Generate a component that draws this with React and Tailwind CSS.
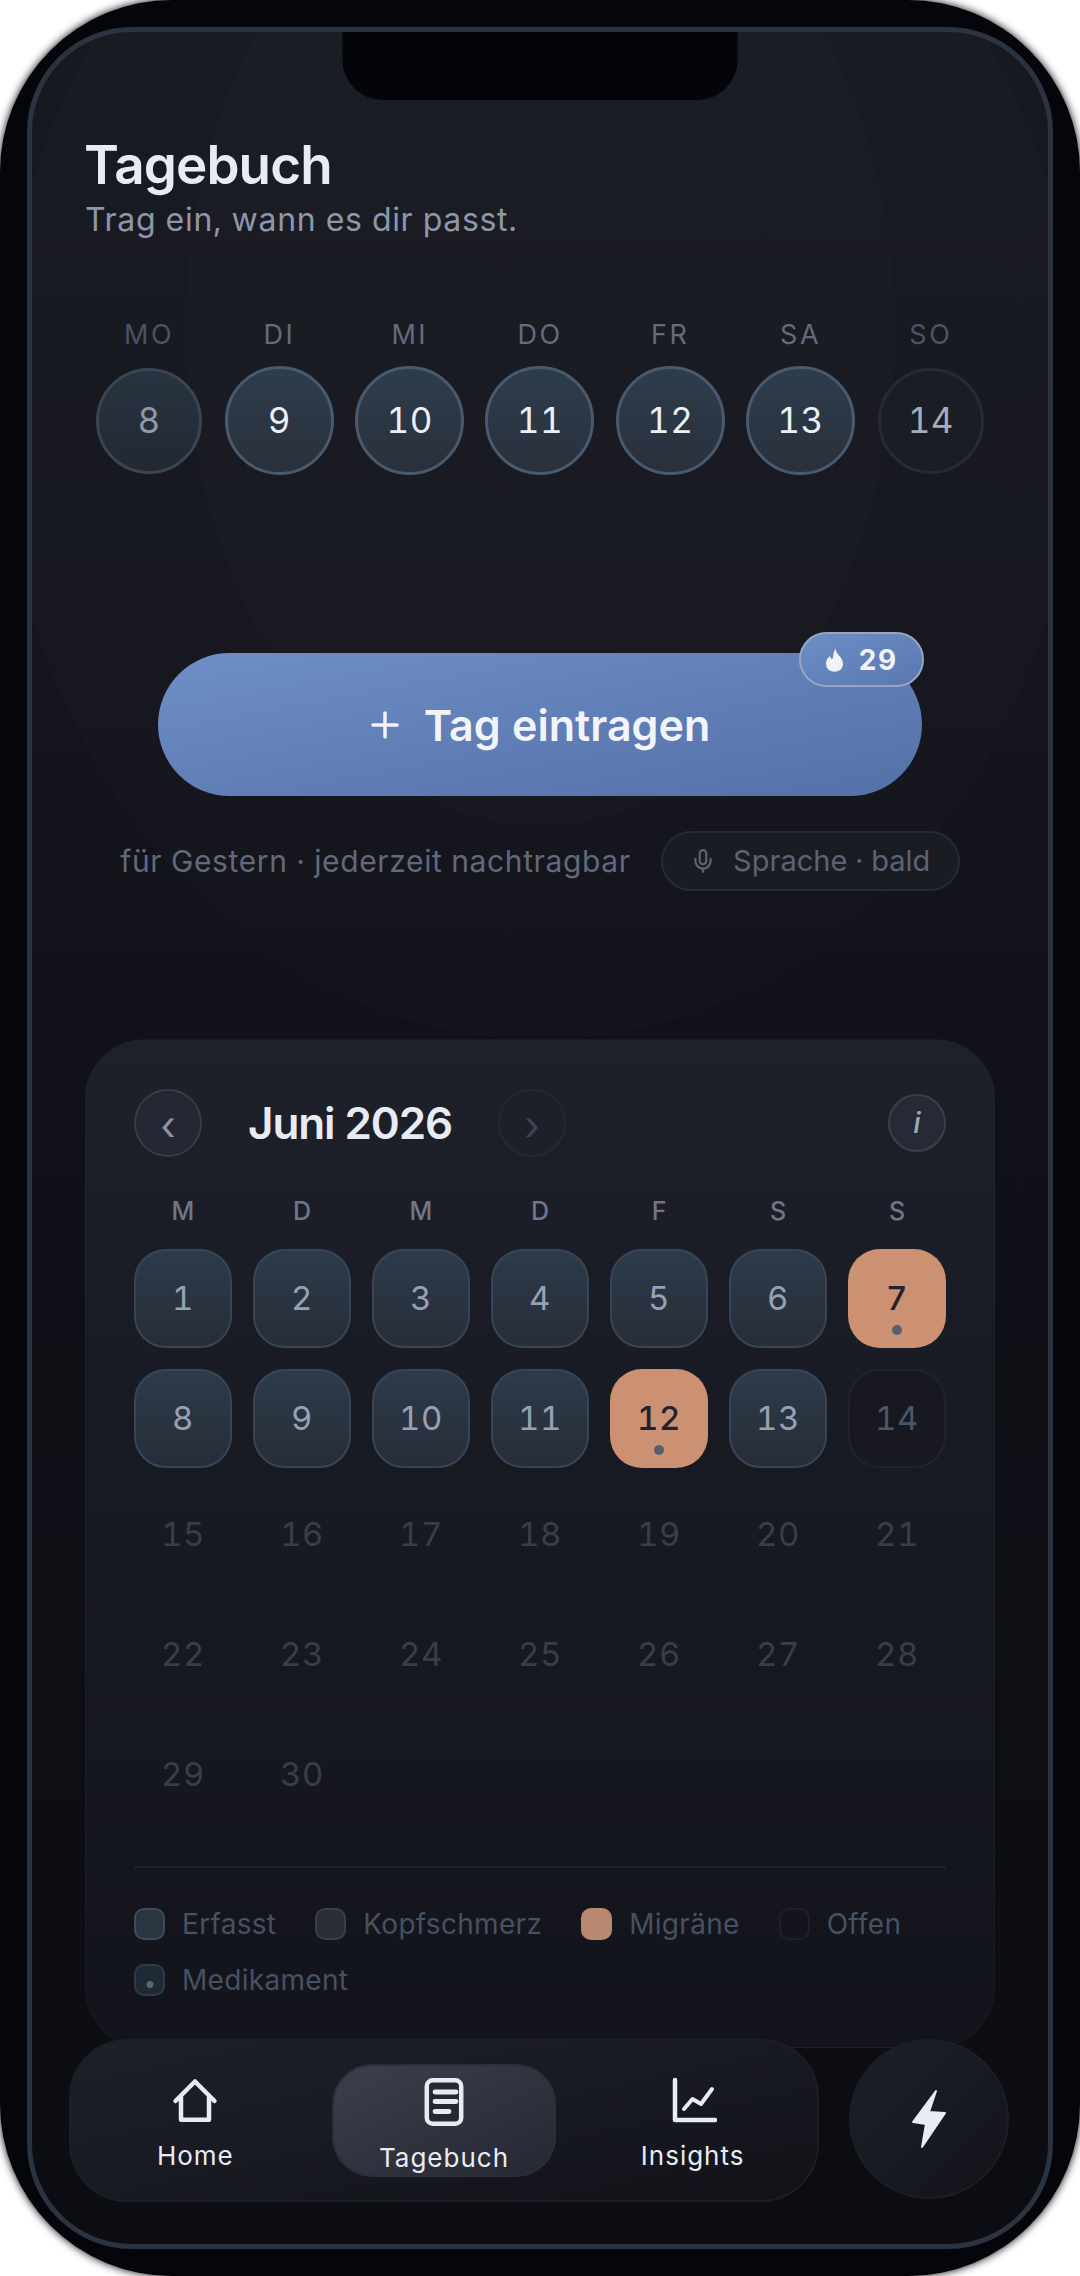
import React from "react";
import { Mic } from "lucide-react";

const week = [
  { l: "MO", d: 8, lc: "text-[#4a5366]", c: "h-[106px] w-[106px] border-[#3a4553] bg-gradient-to-b from-[#283441] to-[#232832] text-[#8f97a9]" },
  { l: "DI", d: 9, lc: "text-[#646b7c]", c: "h-[109px] w-[109px] border-[#4a5a6e] bg-gradient-to-b from-[#2d3d4c] to-[#2a303c] text-[#eceff6]" },
  { l: "MI", d: 10, lc: "text-[#646b7c]", c: "h-[109px] w-[109px] border-[#4a5a6e] bg-gradient-to-b from-[#2d3d4c] to-[#2a303c] text-[#eceff6]" },
  { l: "DO", d: 11, lc: "text-[#646b7c]", c: "h-[109px] w-[109px] border-[#4a5a6e] bg-gradient-to-b from-[#2d3d4c] to-[#2a303c] text-[#eceff6]" },
  { l: "FR", d: 12, lc: "text-[#646b7c]", c: "h-[109px] w-[109px] border-[#4a5a6e] bg-gradient-to-b from-[#2d3d4c] to-[#2a303c] text-[#eceff6]" },
  { l: "SA", d: 13, lc: "text-[#646b7c]", c: "h-[109px] w-[109px] border-[#4a5a6e] bg-gradient-to-b from-[#2d3d4c] to-[#2a303c] text-[#eceff6]" },
  { l: "SO", d: 14, lc: "text-[#4b5566]", c: "h-[106px] w-[106px] border-[#272a34] bg-[#1b1d25] text-[#a5acbc]" },
];

const filled = [1, 2, 3, 4, 5, 6, 8, 9, 10, 11, 13];
const orange = [7, 12];
const days = Array.from({ length: 30 }, (_, i) => i + 1);

function Cell({ n }) {
  if (orange.includes(n)) {
    return (
      <div className="relative flex h-[99px] items-center justify-center rounded-[32px] bg-[#cc9172] text-[33px] font-medium tracking-[0.5px] text-[#1f2330]">
        {n}
        <span className="absolute bottom-[13px] left-1/2 h-[10px] w-[10px] -translate-x-1/2 rounded-full bg-[#555f70]" />
      </div>
    );
  }
  if (filled.includes(n)) {
    return (
      <div className="flex h-[99px] items-center justify-center rounded-[32px] border-2 border-[#364656] bg-gradient-to-b from-[#2c3b4a] to-[#282d38] text-[33px] tracking-[0.5px] text-[#98a1b3]">
        {n}
      </div>
    );
  }
  if (n === 14) {
    return (
      <div className="flex h-[99px] items-center justify-center rounded-[32px] border-2 border-[#20232c] bg-[#171820] text-[33px] tracking-[0.5px] text-[#4b5668]">
        {n}
      </div>
    );
  }
  return <div className="flex h-[99px] items-center justify-center pb-[8px] text-[33px] tracking-[0.5px] text-[#3a3d49]">{n}</div>;
}

function Legend({ c, dot, children }) {
  return (
    <div className="flex items-center gap-[17px]">
      <span className={"relative h-[32px] w-[31px] rounded-[10px] border-2 " + c}>
        {dot && <span className="absolute bottom-[6px] left-1/2 h-[7px] w-[7px] -translate-x-1/2 rounded-full bg-[#5a6475]" />}
      </span>
      <span className="text-[28px] leading-[32px] tracking-[0.3px] text-[#465162]">{children}</span>
    </div>
  );
}

function HomeIcon() {
  return (
    <svg width="48" height="48" viewBox="0 0 48 48" fill="none" stroke="#e8ebf4" strokeWidth="4.5" strokeLinecap="round" strokeLinejoin="round">
      <path d="M4.5 25 L24 5.5 L43.5 25" />
      <path d="M10 21 V43.8 H38 V21" />
    </svg>
  );
}

function DocIcon() {
  return (
    <svg width="48" height="48" viewBox="0 0 48 48" fill="none" strokeLinecap="round">
      <rect x="6.8" y="2.3" width="34.4" height="43.4" rx="6" fill="#252833" stroke="#e8ebf4" strokeWidth="4.5" />
      <path d="M15 14 H36 M15 23.5 H36 M15 33.5 H29" stroke="#e8ebf4" strokeWidth="4.8" />
    </svg>
  );
}

function ChartIcon() {
  return (
    <svg width="48" height="48" viewBox="0 0 48 48" fill="none" stroke="#e8ebf4" strokeLinecap="round" strokeLinejoin="round">
      <path d="M6 4 V44 H46" strokeWidth="4.5" />
      <path d="M15 33 L23.5 23 L32 28 L43 13" strokeWidth="4" />
    </svg>
  );
}

function Tab({ icon, label, active }) {
  return (
    <div
      className={
        "mx-auto flex h-[113px] w-[224px] flex-col items-center rounded-[40px] pt-[12px] " +
        (active ? "border-2 border-[#2c2f3b] bg-gradient-to-br from-[#3d404c] to-[#252832]" : "")
      }
    >
      {icon}
      <span className="mt-[15px] text-[26px] leading-[34px] tracking-[1px] text-[#e8ebf4]">{label}</span>
    </div>
  );
}

export default function App() {
  return (
    <div className="h-[2276px] w-[1080px] bg-white font-['Inter',sans-serif] tabular-nums">
      <div className="h-full w-full rounded-[172px] bg-[#05060b] p-[27px] shadow-[0_0_8px_#05060b]">
        <div className="relative h-full w-full overflow-hidden rounded-[105px] border-[5px] border-[#2a3340] bg-[linear-gradient(to_bottom,#171921_0%,#14151d_30%,#101118_50%,#0c0d12_100%)]">
          <div className="pointer-events-none absolute left-[-32px] top-[-272px] h-[1280px] w-[1080px] rounded-[50%] bg-white/[0.01]" />
          <div className="pointer-events-none absolute left-[153px] top-[-197px] h-[990px] w-[710px] rounded-[50%] bg-white/[0.01]" />

          <div className="absolute left-1/2 top-0 h-[68px] w-[395px] -translate-x-1/2 rounded-b-[40px] bg-[#04050a]" />

          <div className="relative px-[53px] pt-[103px]">
            <h1 className="-ml-px text-[53px] font-semibold leading-[60px] tracking-[-0.9px] text-[#e8ebf4]">Tagebuch</h1>
            <p className="mt-[5px] text-[32px] leading-[40px] tracking-[0.7px] text-[#8e96aa]">Trag ein, wann es dir passt.</p>

            <div className="-mx-px mt-[78px] grid h-[156px] grid-cols-7">
              {week.map((w) => (
                <div key={w.l} className="flex flex-col items-center">
                  <span className={"text-[27px] leading-[34px] tracking-[2.5px] " + w.lc}>{w.l}</span>
                  <span className="mt-[14px] flex h-[109px] items-center justify-center">
                    <span className={"flex items-center justify-center rounded-full border-[3px] text-[35px] tracking-[0.5px] " + w.c}>{w.d}</span>
                  </span>
                </div>
              ))}
            </div>

            <div className="relative mx-[73px] mt-[179px] flex h-[143px] items-center justify-center gap-[24px] rounded-[72px] bg-gradient-to-br from-[#6e8fc6] to-[#5470a7] text-[#f2f4fa]">
              <svg width="30" height="30" viewBox="0 0 30 30" stroke="#f2f4fa" strokeWidth="3.5" strokeLinecap="round">
                <path d="M15 3 V27 M3 15 H27" />
              </svg>
              <span className="text-[43px] font-semibold leading-[50px]">Tag eintragen</span>
              <div className="absolute right-[-2px] top-[-21px] flex h-[55px] w-[125px] items-center justify-center gap-[14px] rounded-[28px] border-2 border-[#98a5bd] bg-gradient-to-br from-[#6d8ec6] to-[#5a77b0]">
                <svg width="19" height="24" viewBox="0 0 19 24" fill="#f0f2f8">
                  <path d="M10.5 0.5 C10.8 6.5 18 9 18 16 C18 21 14 23.7 9.5 23.7 C4.5 23.7 1 20.5 1 15.5 C1 12 3 9.8 5 8 C5.4 10.3 6.3 11 7.5 11 C8.5 8 8.2 4 10.5 0.5 Z" />
                </svg>
                <span className="text-[28px] font-bold leading-[34px] tracking-[1.5px] text-[#f2f4fa]">29</span>
              </div>
            </div>

            <div className="mt-[35px] flex items-center justify-center gap-[30px]">
              <span className="text-[30px] leading-[38px] tracking-[0.63px] text-[#62697a]">für Gestern · jederzeit nachtragbar</span>
              <div className="flex h-[60px] w-[299px] items-center justify-center gap-[17px] rounded-full border-2 border-[#262a35] bg-[#1a1c24]">
                <Mic size={26} color="#5c6375" strokeWidth={2} />
                <span className="text-[29px] leading-[36px] text-[#5c6375]">Sprache · bald</span>
              </div>
            </div>

            <div className="mt-[148px] h-[1009px] rounded-[60px] border border-[#23252e]/40 bg-gradient-to-b from-[#1e202a] via-[#181a22] via-45% to-[#13141b] px-[48px] pt-[49px]">
              <div className="flex items-center">
                <span className="flex h-[68px] w-[68px] items-center justify-center rounded-full border-2 border-[#383c48] bg-[#252833] pt-[6px] text-[40px] leading-[40px] text-[#8b93a5]">‹</span>
                <span className="ml-[46px] text-[44px] font-semibold leading-[52px] tracking-[-1.1px] text-[#e8ebf4] [font-variant-numeric:normal]">Juni 2026</span>
                <span className="ml-[46px] flex h-[68px] w-[68px] items-center justify-center rounded-full border-2 border-[#252833] bg-[#1e2029] pt-[6px] text-[40px] leading-[40px] text-[#3c4352]">›</span>
                <span className="ml-auto flex h-[58px] w-[58px] items-center justify-center rounded-full border-2 border-[#3a3f4c] bg-[#262a35] text-[29px] font-medium italic leading-[36px] text-[#a0a8ba]">i</span>
              </div>

              <div className="mt-[39px] grid grid-cols-7 gap-x-[21px]">
                {["M", "D", "M", "D", "F", "S", "S"].map((d, i) => (
                  <span key={i} className="text-center text-[25px] font-medium leading-[30px] text-[#6f7688]">{d}</span>
                ))}
              </div>

              <div className="mt-[23px] grid grid-cols-7 gap-x-[21px] gap-y-[21px]">
                {days.map((n) => (
                  <Cell key={n} n={n} />
                ))}
              </div>

              <div className="mt-[38px] h-[2px] bg-[#20232c]" />

              <div className="mt-[40px] flex flex-wrap gap-x-[39px] gap-y-[24px]">
                <Legend c="border-[#3b4d5e] bg-[#2a3542]">Erfasst</Legend>
                <Legend c="border-[#3c3e47] bg-[#2c2e36]">Kopfschmerz</Legend>
                <Legend c="border-[#b98870] bg-[#b98870]">Migräne</Legend>
                <Legend c="border-[#1d2028] bg-[#14151c]">Offen</Legend>
                <Legend c="border-[#2d3a47] bg-[#1f2a34]" dot>Medikament</Legend>
              </div>
            </div>
          </div>

          <div className="absolute bottom-[42px] left-[37px] flex items-start gap-[30px]">
            <nav className="grid h-[163px] w-[750px] grid-cols-3 items-center rounded-[58px] border-2 border-[#1c1e26] bg-gradient-to-br from-[#1e2029] to-[#121319]">
              <Tab icon={<HomeIcon />} label="Home" />
              <Tab icon={<DocIcon />} label="Tagebuch" active />
              <Tab icon={<ChartIcon />} label="Insights" />
            </nav>
            <div className="flex h-[160px] w-[160px] items-center justify-center rounded-full border-2 border-[#1c1e26] bg-gradient-to-br from-[#1e2029] to-[#13141a]">
              <svg width="36" height="60" viewBox="0 0 36 60" fill="#e8ebf4" stroke="#e8ebf4" strokeWidth="2" strokeLinejoin="round">
                <path d="M25 2 L18 23 L34 24 L11 58 L15 35 L2 33 Z" />
              </svg>
            </div>
          </div>
        </div>
      </div>
    </div>
  );
}
